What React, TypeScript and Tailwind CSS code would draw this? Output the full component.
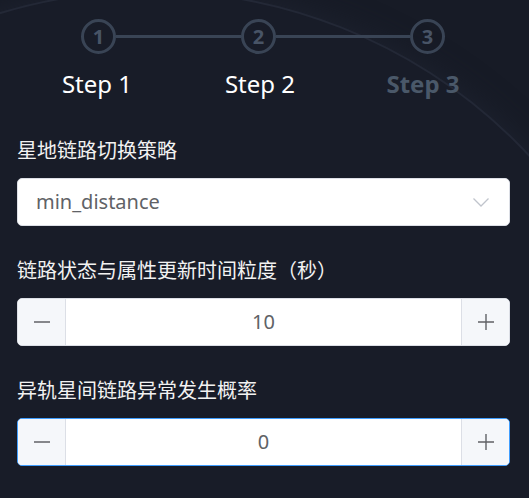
import React from 'react';

const font = { fontFamily: '"Noto Sans", "Noto Sans CJK SC", sans-serif' };

const StepCircle: React.FC<{ n: number }> = ({ n }) => (
  <div className="flex h-[35px] w-[35px] flex-shrink-0 items-center justify-center rounded-full border-[3px] border-[#394455] text-[20px] font-bold leading-none text-[#485466]">
    {n}
  </div>
);

const Steps: React.FC = () => (
  <div className="pt-[19px]">
    <div className="ml-[81px] flex items-center">
      <StepCircle n={1} />
      <div className="h-[3px] w-[125px] bg-[#394455]" />
      <StepCircle n={2} />
      <div className="h-[3px] w-[134px] bg-[#394455]" />
      <StepCircle n={3} />
    </div>
    <div className="mt-[12px] flex text-[24px] leading-[36px]">
      <div className="ml-[37px] w-[120px] text-center text-white">Step 1</div>
      <div className="ml-[43px] w-[120px] text-center text-white">Step 2</div>
      <div className="ml-[43px] w-[120px] text-center font-bold text-[#4a5869]">Step 3</div>
    </div>
  </div>
);

const Minus = () => (
  <svg width="16" height="16" viewBox="0 0 16 16" fill="none" stroke="#606266" strokeWidth="1.6">
    <path d="M0 8h16" />
  </svg>
);

const Plus = () => (
  <svg width="16" height="16" viewBox="0 0 16 16" fill="none" stroke="#606266" strokeWidth="1.4">
    <path d="M0 8h16M8 0v16" />
  </svg>
);

const NumberInput: React.FC<{ value: string; focused?: boolean }> = ({ value, focused }) => (
  <div
    className={`flex h-[48px] overflow-hidden rounded-[5px] border bg-white ${
      focused ? 'border-[#409eff]' : 'border-[#dcdfe6]'
    }`}
  >
    <div className="flex w-[48px] items-center justify-center border-r border-[#dcdfe6] bg-[#f5f7fa]">
      <Minus />
    </div>
    <div className="flex flex-1 items-center justify-center text-[20px] text-[#606266]">{value}</div>
    <div className="flex w-[48px] items-center justify-center border-l border-[#dcdfe6] bg-[#f5f7fa]">
      <Plus />
    </div>
  </div>
);

const FormItem: React.FC<{ label: string; children: React.ReactNode }> = ({ label, children }) => (
  <div className="mb-[30px]">
    <div className="mb-[12px] text-[20px] leading-[30px] text-[#f2f2f2]">{label}</div>
    {children}
  </div>
);

export default function App() {
  return (
    <div className="relative h-[498px] w-[529px] overflow-hidden bg-[#171b26]" style={font}>
      {/* faint planet limb in the backdrop */}
      <div className="pointer-events-none absolute left-[-370px] top-[-10px] h-[1040px] w-[1040px] rounded-full border-[2px] border-[#232836] bg-[#181c28] shadow-[0_0_30px_#1e2330]" />
      <div className="relative">
        <Steps />
        <div className="mt-[34px] px-[17px] pr-[19px]">
          <FormItem label="星地链路切换策略">
            <div className="flex h-[48px] items-center justify-between rounded-[5px] border border-[#dcdfe6] bg-white pl-[18px] pr-[20px]">
              <span className="text-[20px] text-[#606266]">min_distance</span>
              <svg width="16" height="9" viewBox="0 0 16 9" fill="none" stroke="#c0c4cc" strokeWidth="1.3">
                <path d="M0.5 0.5L8 8L15.5 0.5" />
              </svg>
            </div>
          </FormItem>
          <FormItem label="链路状态与属性更新时间粒度（秒）">
            <NumberInput value="10" />
          </FormItem>
          <FormItem label="异轨星间链路异常发生概率">
            <NumberInput value="0" focused />
          </FormItem>
        </div>
      </div>
    </div>
  );
}
